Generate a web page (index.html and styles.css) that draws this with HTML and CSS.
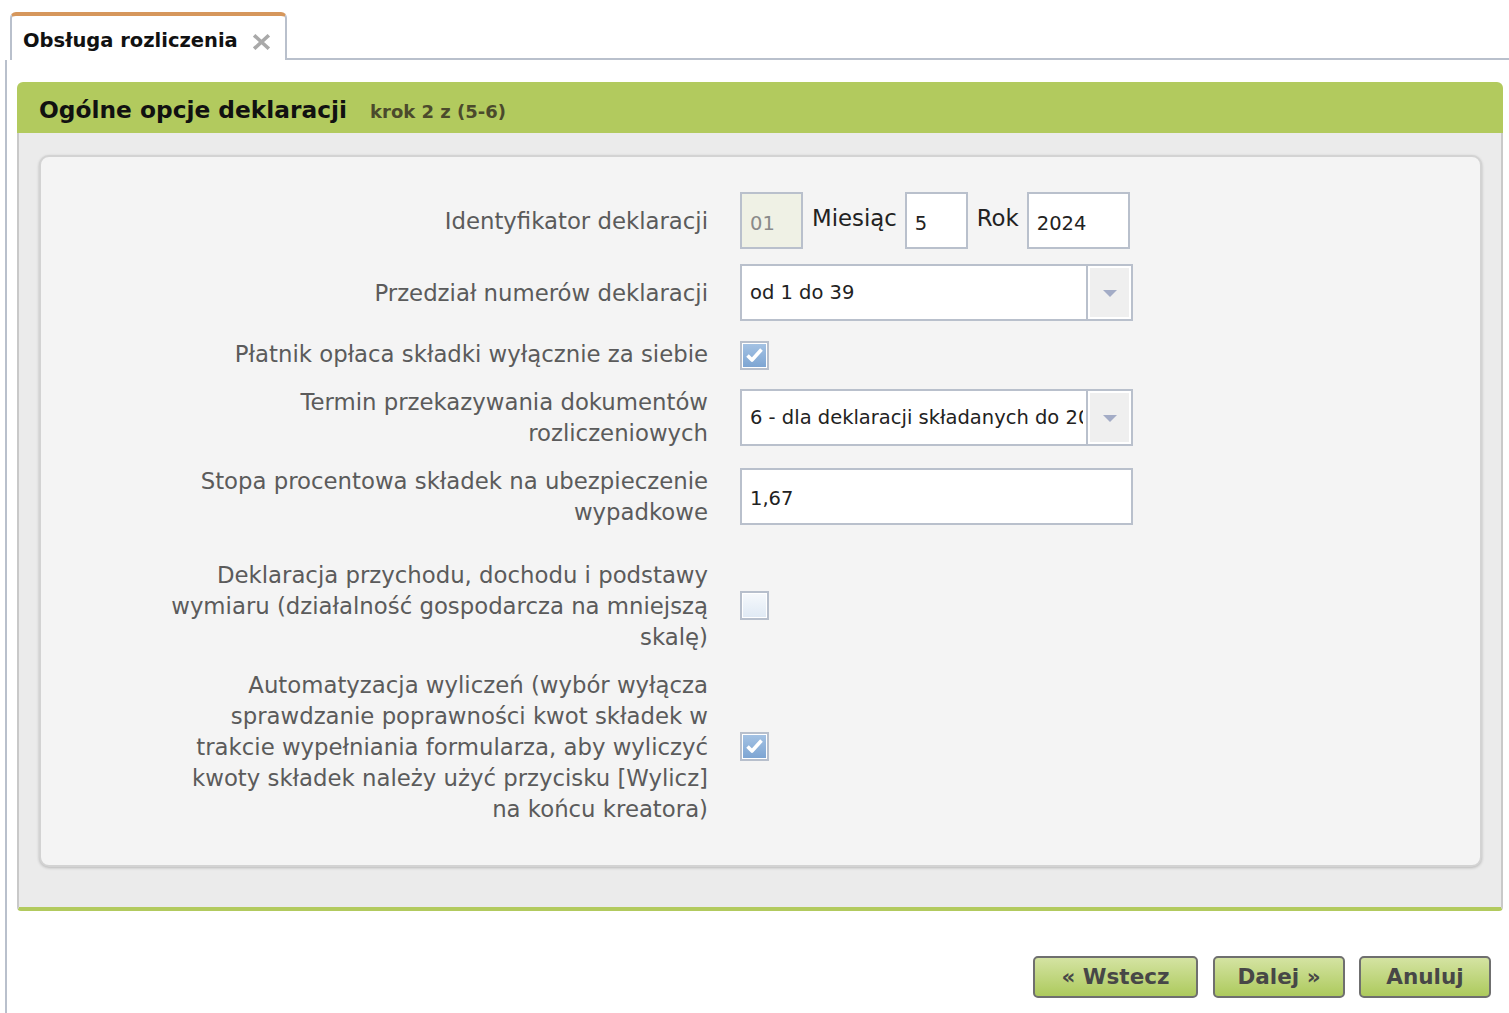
FILE: index.html
```html
<!DOCTYPE html>
<html lang="pl">
<head>
<meta charset="utf-8">
<title>Obsługa rozliczenia</title>
<link rel="stylesheet" href="styles.css">
</head>
<body>
<div class="tabbar">
  <div class="tab">
    <span class="tab-title">Obsługa rozliczenia</span>
    <svg class="tab-close" width="17" height="16" viewBox="0 0 17 16"><path d="M2.5 2.5 L14.5 13.5 M14.5 2.5 L2.5 13.5" stroke="#a9a9a9" stroke-width="3.6" stroke-linecap="square"/></svg>
  </div>
  <div class="tab-fill"></div>
</div>
<div class="content">
  <div class="panel">
    <div class="panel-head">
      <h1 class="panel-title">Ogólne opcje deklaracji</h1>
      <span class="panel-step">krok 2 z (5-6)</span>
    </div>
    <div class="panel-body">
      <div class="card">
        <div class="form">
          <div class="label">Identyfikator deklaracji</div>
          <div class="ctrl">
            <input class="field field-id" type="text" value="01" readonly>
            <span class="inline-label lbl-month">Miesiąc</span>
            <input class="field field-month" type="text" value="5">
            <span class="inline-label lbl-year">Rok</span>
            <input class="field field-year" type="text" value="2024">
          </div>

          <div class="label">Przedział numerów deklaracji</div>
          <div class="ctrl">
            <div class="combo">
              <div class="combo-text">od 1 do 39</div>
              <div class="combo-btn"><span class="combo-arrow"></span></div>
            </div>
          </div>

          <div class="label">Płatnik opłaca składki wyłącznie za siebie</div>
          <div class="ctrl">
            <span class="check checked check-low"><svg width="29" height="29" viewBox="0 0 29 29"><path d="M7.5 14.5 L12 19 L21.5 8.5" fill="none" stroke="#fff" stroke-width="3.6" stroke-linejoin="round"/></svg></span>
          </div>

          <div class="label">Termin przekazywania dokumentów<br>rozliczeniowych</div>
          <div class="ctrl">
            <div class="combo">
              <div class="combo-text">6 - dla deklaracji składanych do 20 dnia miesiąca</div>
              <div class="combo-btn"><span class="combo-arrow"></span></div>
            </div>
          </div>

          <div class="label">Stopa procentowa składek na ubezpieczenie<br>wypadkowe</div>
          <div class="ctrl">
            <input class="field field-wide" type="text" value="1,67">
          </div>

          <div class="label row-gap">Deklaracja przychodu, dochodu i podstawy<br>wymiaru (działalność gospodarcza na mniejszą<br>skalę)</div>
          <div class="ctrl row-gap">
            <span class="check"></span>
          </div>

          <div class="label">Automatyzacja wyliczeń (wybór wyłącza<br>sprawdzanie poprawności kwot składek w<br>trakcie wypełniania formularza, aby wyliczyć<br>kwoty składek należy użyć przycisku [Wylicz]<br>na końcu kreatora)</div>
          <div class="ctrl">
            <span class="check checked"><svg width="29" height="29" viewBox="0 0 29 29"><path d="M7.5 14.5 L12 19 L21.5 8.5" fill="none" stroke="#fff" stroke-width="3.6" stroke-linejoin="round"/></svg></span>
          </div>
        </div>
      </div>
    </div>
  </div>
  <div class="actions">
    <button class="btn btn-back">« Wstecz</button>
    <button class="btn btn-next">Dalej »</button>
    <button class="btn btn-cancel">Anuluj</button>
  </div>
</div>
</body>
</html>
```

FILE: styles.css
```css
* { box-sizing: border-box; }
html, body { margin: 0; padding: 0; background: #fff; }
body {
  font-family: "DejaVu Sans", Verdana, sans-serif;
  color: #222;
  overflow: hidden;
}

/* Tabs */
.tabbar {
  display: flex;
  padding: 12px 0 0 10px;
  height: 60px;
}
.tab {
  width: 277px;
  height: 48px;
  background: #fff;
  border: 2px solid #b9c0cc;
  border-top: 4px solid #d6975c;
  border-bottom: 0;
  border-radius: 6px 6px 0 0;
  display: flex;
  align-items: center;
  padding: 4px 0 0 11px;
}
.tab-title {
  font-weight: bold;
  font-size: 19.5px;
  color: #111;
}
.tab-close { margin-left: 15px; margin-top: 3px; }
.tab-fill {
  flex: 1;
  border-bottom: 2px solid #b9c0cc;
}

/* Content */
.content {
  margin-left: 5px;
  border-left: 2px solid #b9c0cc;
  padding: 22px 6px 0 10px;
  height: calc(100vh - 60px);
}

.panel-head {
  height: 51px;
  background: #b2ca5e;
  border-radius: 6px 6px 0 0;
  display: flex;
  align-items: center;
  padding: 3px 0 0 22px;
}
.panel-title {
  margin: 0;
  font-size: 23.3px;
  font-weight: bold;
  color: #111;
}
.panel-step {
  margin-left: 23px;
  margin-top: 4px;
  font-size: 18px;
  font-weight: bold;
  color: #4b4a2c;
}
.panel-body {
  background: #ebebeb;
  border-left: 2px solid #c9c9c9;
  border-right: 2px solid #c9c9c9;
  border-bottom: 4px solid #b2ca5e;
  border-radius: 0 0 4px 4px;
  padding: 22px 19px 40px 20px;
}
.card {
  background: #f4f4f4;
  border: 2px solid #d3d3d3;
  border-radius: 10px;
  box-shadow: 0 1px 3px rgba(0,0,0,0.22);
  padding: 35px 0 40px 0;
}

/* Form */
.form {
  display: grid;
  grid-template-columns: 667px 1fr;
  column-gap: 32px;
  row-gap: 15px;
  align-items: center;
}
.label {
  text-align: right;
  font-size: 22.8px;
  line-height: 31px;
  padding-top: 2px;
  color: #5b5b5b;
  white-space: nowrap;
}
.row-gap { margin-top: 15px; }
.ctrl {
  display: flex;
  align-items: center;
}
.field {
  height: 57px;
  border: 2px solid #b9c0cc;
  background: #fff;
  font-family: "DejaVu Sans", Verdana, sans-serif;
  font-size: 19.5px;
  color: #222;
  padding: 5px 8px 0 8px;
  outline: none;
  margin: 0;
}
.field-id { width: 63px; background: #eff1e5; color: #8a8a8a; }
.field-month { width: 63px; }
.field-year { width: 103px; }
.field-wide { width: 393px; }
.inline-label {
  font-size: 22.8px;
  color: #222;
}
.lbl-month { margin: 0 8px 6px 9px; }
.lbl-year { margin: 0 8px 6px 9px; }

.combo {
  width: 393px;
  height: 57px;
  border: 2px solid #b9c0cc;
  background: #fff;
  display: flex;
}
.combo-text {
  flex: 1;
  min-width: 0;
  overflow: hidden;
  white-space: nowrap;
  font-size: 19.5px;
  line-height: 53px;
  padding-left: 8px;
  margin-right: 3px;
  color: #222;
}
.combo-btn {
  width: 45px;
  border-left: 2px solid #b9c0cc;
  background: #efefef;
  box-shadow: inset 0 0 0 2px #fff;
  display: flex;
  align-items: center;
  justify-content: center;
}
.combo-arrow {
  width: 0;
  height: 0;
  border-left: 7px solid transparent;
  border-right: 7px solid transparent;
  border-top: 7px solid #a3acc6;
  margin-top: 2px;
}

.check {
  display: block;
  width: 29px;
  height: 29px;
  border: 2px solid #b7bfcc;
  box-shadow: inset 0 0 0 1px #fff;
  background: linear-gradient(#f6f9fc, #dfe9f4);
  position: relative;
}
.check svg { position: absolute; left: -2px; top: -2px; }
.check.checked {
  background: linear-gradient(#a5c3e4, #7ca4d2);
}
.check-low { margin-top: 5px; }

/* Actions */
.actions {
  display: flex;
  justify-content: flex-end;
  gap: 14px;
  margin-top: 45px;
  padding-right: 12px;
}
.btn {
  height: 42px;
  border: 2px solid #6f6f6f;
  border-radius: 5px;
  background: linear-gradient(#d4e3a2, #adca5d);
  font-family: "DejaVu Sans", Verdana, sans-serif;
  font-weight: bold;
  font-size: 21.5px;
  color: #474747;
  padding: 0 0 1px 0;
  cursor: pointer;
}
.btn-back { width: 165px; }
.btn-next { width: 132px; margin-left: 1px; }
.btn-cancel { width: 132px; }
```
